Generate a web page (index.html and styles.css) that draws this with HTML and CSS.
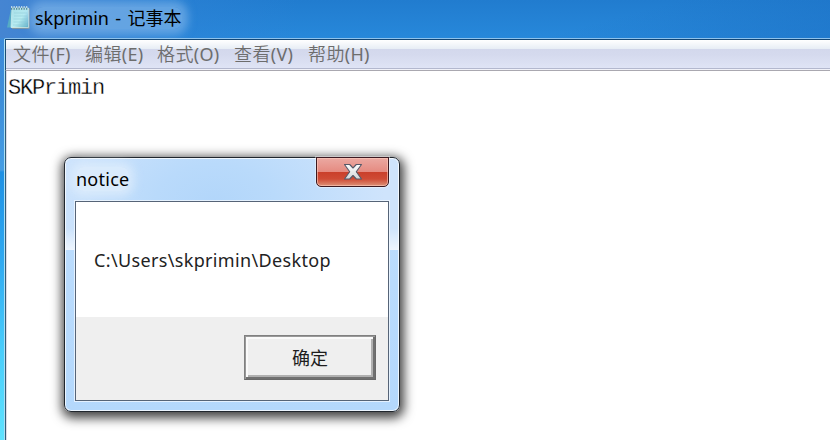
FILE: index.html
```
<!DOCTYPE html>
<html lang="zh-CN">
<head>
<meta charset="utf-8">
<title>skprimin - 记事本</title>
<link rel="stylesheet" href="styles.css">
</head>
<body>
<div class="window">
  <header class="titlebar">
    <svg class="app-icon" width="24" height="25" viewBox="0 0 24 25">
      <defs>
        <linearGradient id="page" x1="0" y1="0" x2="1" y2="1">
          <stop offset="0" stop-color="#a4dce6"/><stop offset=".55" stop-color="#b9edf2"/><stop offset="1" stop-color="#58aec2"/>
        </linearGradient>
      </defs>
      <path d="M4 4L0 22.500H6L9 4Z" fill="#55abc5"/>
      <path d="M21 3.500H22.500V23.500H5V22Z" fill="#b8a578"/>
      <path d="M5 3H21.500V22.500H4Z" fill="url(#page)" stroke="#d4f1f2" stroke-width=".7"/>
      <path d="M7 8H20M7 11H20M6.500 14H20M6.500 17H20M6 20H20" stroke="#90ced8" stroke-width=".6"/>
      <path d="M4 3.500H21" stroke="#5a8994" stroke-width="2.500" stroke-dasharray="1.300 1.200"/>
      <path d="M4 2H21" stroke="#dceef0" stroke-width="1.500" stroke-dasharray="1.300 1.200"/>
    </svg>
    <span class="window-title"><span class="latin">skprimin - </span>记事本</span>
  </header>
  <main class="client">
    <nav class="menu">
      <span class="item">文件<span class="key">(F)</span></span>
      <span class="item">编辑<span class="key">(E)</span></span>
      <span class="item wide">格式<span class="key">(O)</span></span>
      <span class="item mid">查看<span class="key">(V)</span></span>
      <span class="item">帮助<span class="key">(H)</span></span>
    </nav>
    <div class="editor">SKPrimin</div>
  </main>
</div>
<section class="dialog">
  <header class="dialog-head">
    <span class="dialog-title">notice</span>
    <span class="close">
      <svg width="20" height="18" viewBox="0 0 20 18">
        <defs><linearGradient id="cross" x1="0" y1="0" x2="0" y2="1"><stop offset="0" stop-color="#fff"/><stop offset="1" stop-color="#d2d5d9"/></linearGradient></defs>
        <path d="M1.500 1.500H6.700L10 5L13.300 1.500H18.500L13.300 8.700L18.500 16H13.300L10 12.500L6.700 16H1.500L6.700 8.700Z" fill="url(#cross)" stroke="#555968" stroke-width="1.100" stroke-linejoin="round"/>
      </svg>
    </span>
  </header>
  <div class="dialog-body">
    <p class="message">C:\Users\skprimin\Desktop</p>
    <footer class="actions"><button class="ok">确定</button></footer>
  </div>
</section>
</body>
</html>
```
FILE: styles.css
```
* { box-sizing: border-box; }
body {
  margin: 0;
  width: 830px;
  height: 440px;
  overflow: hidden;
  font-family: "Noto Sans", "Noto Sans CJK SC", sans-serif;
}
.window {
  width: 830px;
  height: 440px;
  display: flex;
  flex-direction: column;
  padding-left: 4px;
  background:
    linear-gradient(90deg, #4585d2 0, rgba(46, 130, 214, .5) 180px, transparent 300px) 0 0 / 100% 38px no-repeat,
    linear-gradient(165deg, transparent 70%, rgba(25, 105, 190, .45)) 0 0 / 100% 38px no-repeat,
    linear-gradient(#217ccf, #2788da) 0 0 / 100% 38px no-repeat,
    linear-gradient(#3a88d8 0, #3d8ed9 100px, #459de4 170px, #1e90e4 172px, #2fa9f1 260px, #48cdfc 350px, #5fe2ff 440px);
}
.titlebar {
  height: 38px;
  flex: none;
  display: flex;
  align-items: flex-start;
  padding: 5px 0 0 3px;
}
.app-icon { flex: none; }
.window-title {
  height: 22px;
  margin: 2px 0 0 4px;
  font-size: 18px;
  line-height: 22px;
  color: #000;
  white-space: pre;
  background: rgba(128, 182, 234, .65);
  box-shadow: 0 0 9px 6px rgba(128, 182, 234, .65);
  border-radius: 8px;
}
.window-title .latin { word-spacing: 1.7px; }
.client {
  flex: 1;
  display: flex;
  flex-direction: column;
  border-top: 1px solid #8fc3ec;
  border-left: 1px solid #acdff5;
  border-top-left-radius: 2px;
  background: #fff;
}
.menu {
  height: 32px;
  flex: none;
  display: flex;
  padding-left: 7px;
  border-top: 1px solid #134674;
  border-left: 1px solid #1c4e73;
  border-bottom: 1px solid #aaa8b0;
  background:
    linear-gradient(#b3b8ce, #b3b8ce) 0 28px / 100% 1px no-repeat,
    linear-gradient(#fff 0, #e7edf5 9px, #d3d8ec 9px, #d5daee 15px, #dfe4f5 28px, #f0f1f8 28px);
  color: #6d6d6d;
  font-size: 18px;
  font-weight: 350;
  line-height: 28px;
  white-space: nowrap;
}
.item {
  width: 72px;
  letter-spacing: .4px;
}
.item.wide { width: 77px; }
.item.mid { width: 74px; }
.key {
  font-weight: 400;
  letter-spacing: .25px;
}
.editor {
  flex: 1;
  border-left: 1px solid #305e79;
  box-shadow: inset 1px 0 #dedce8;
  padding: 5px 0 0 2px;
  font-family: "Liberation Mono", monospace;
  font-size: 22px;
  letter-spacing: -1.2px;
  line-height: 25px;
  color: #000;
  -webkit-text-stroke: .3px #fff;
}
.dialog {
  position: absolute;
  left: 64px;
  top: 157px;
  width: 336px;
  height: 255px;
  padding: 0 10px 10px;
  display: flex;
  flex-direction: column;
  border: 1px solid #20262d;
  border-radius: 7px;
  background:
    linear-gradient(transparent 0, transparent 70px, rgba(255, 255, 255, .65) 92px, transparent 92px),
    radial-gradient(ellipse 170px 110px at 150px 45px, #b2d6fa 0, #b9dafb 35%, #cfe4fc 100%) 0 0 / 100% 92px no-repeat,
    linear-gradient(#bedefe, #b4d8fc);
  box-shadow: inset 0 0 0 1px rgba(255, 255, 255, .75), 1px 3px 11px 3px rgba(0, 0, 0, .75);
}
.dialog-head {
  height: 43px;
  flex: none;
  display: flex;
  justify-content: space-between;
}
.dialog-title {
  height: 24px;
  margin: 9px 0 0 1px;
  font-size: 18px;
  letter-spacing: .25px;
  line-height: 25px;
  border-radius: 8px;
  background: rgba(226, 239, 252, .7);
  box-shadow: 0 0 10px 5px rgba(226, 239, 252, .7);
}
.close {
  width: 73px;
  height: 30px;
  margin-top: -1px;
  display: flex;
  align-items: center;
  justify-content: center;
  border: 1px solid #3c1920;
  border-radius: 0 0 5px 5px;
  background: linear-gradient(#eba9a2 0, #e58a80 14px, #ca3f2b 14px, #cf4b35 21px, #dc9278 28px);
  box-shadow: inset 0 0 0 1px rgba(255, 205, 190, .6), 0 0 0 1px rgba(255, 255, 255, .4);
}
.dialog-body {
  flex: 1;
  display: flex;
  flex-direction: column;
  border: 1px solid #566477;
  background: #fff;
  box-shadow: 0 0 0 1px rgba(240, 248, 255, .8);
}
.message {
  height: 115px;
  margin: 0;
  padding-left: 18px;
  font-size: 18px;
  letter-spacing: .35px;
  line-height: 117px;
  color: #222;
  white-space: nowrap;
}
.actions {
  flex: 1;
  display: flex;
  justify-content: flex-end;
  padding: 18px 12px 0 0;
  background: #efefef;
}
.ok {
  width: 132px;
  height: 45px;
  padding: 0 0 2px;
  border: 1px solid;
  border-color: #808080 #696969 #696969 #808080;
  background: #efefef;
  box-shadow: inset 1px 1px #999, inset -2px -2px #707070, inset 3px 3px #fafafa, inset -4px -4px #b0b0b0;
  font-family: "Noto Sans CJK SC", sans-serif;
  font-size: 18px;
  color: #1d1d1d;
}
```
